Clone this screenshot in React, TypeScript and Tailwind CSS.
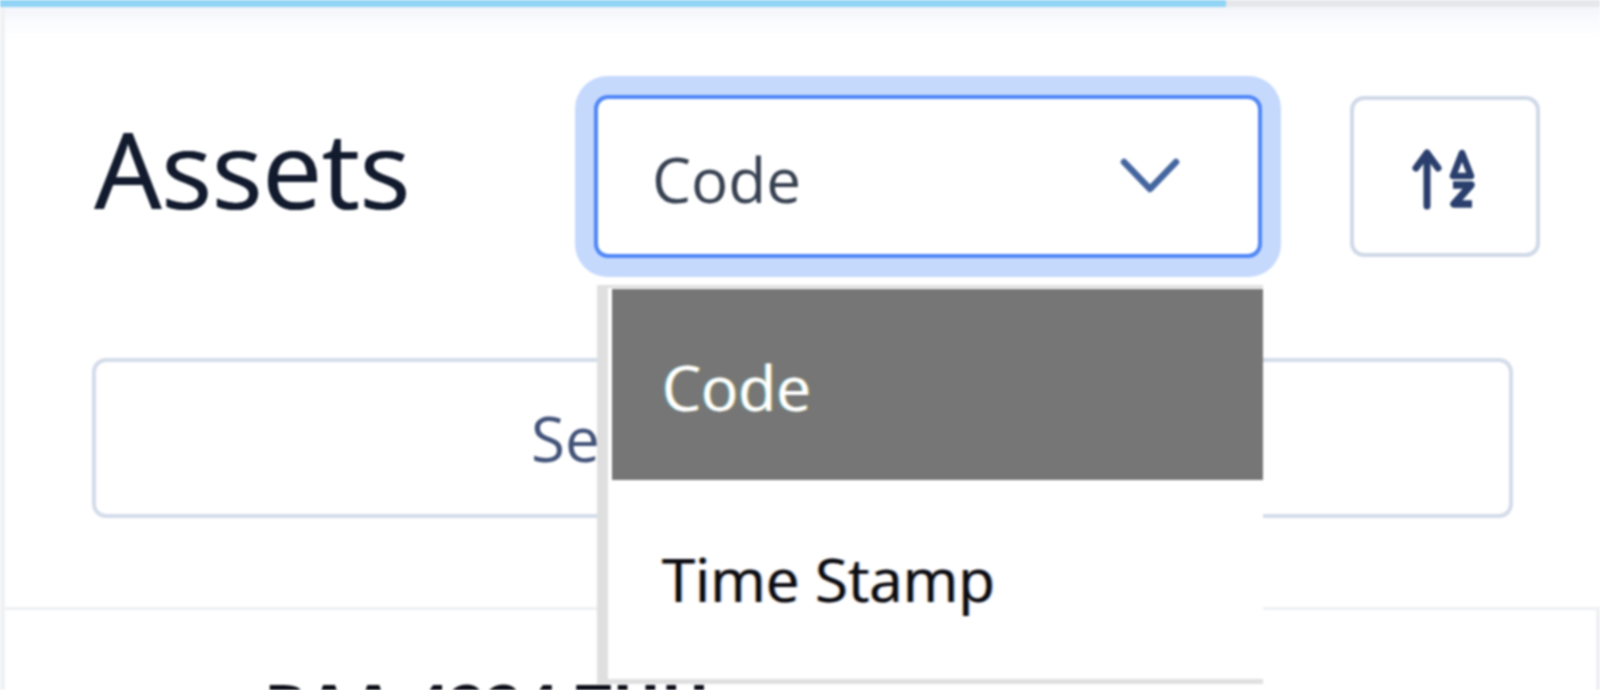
function SortIcon() {
  return (
    <svg width="66" height="62" viewBox="0 0 66 62" fill="none" className="text-[#2a3f6d]">
      {/* arrow */}
      <path d="M15 58V5M4 20 15 5l11 15" stroke="currentColor" strokeWidth="7" strokeLinecap="round" strokeLinejoin="round" />
      {/* small A */}
      <path d="M50 5 41 28h18L50 5Z" stroke="currentColor" strokeWidth="6.5" strokeLinejoin="round" />
      {/* small Z */}
      <path d="M41 37h18L42 56h18" stroke="currentColor" strokeWidth="7.5" strokeLinejoin="round" />
    </svg>
  );
}

function SortSelect() {
  return (
    <div className="relative w-[668px] h-[163px] shrink-0 bg-white rounded-[14px] border-4 border-[#4f86f6] ring-[19px] ring-[#c5d9fd]">
      <div className="flex h-full items-center justify-between pl-[54px] pr-[78px] pt-[4px]">
        <span className="text-[62px] leading-none text-[#374151]">Code</span>
        <svg width="60" height="36" viewBox="0 0 60 36" fill="none" className="text-[#44659f] -mt-[6px]">
          <path d="M4 4 30 31 56 4" stroke="currentColor" strokeWidth="6.5" strokeLinecap="round" strokeLinejoin="round" />
        </svg>
      </div>

      {/* open menu lies over the search box */}
      <div className="absolute left-[-1px] top-[186px] w-[666px] h-[399px] bg-white border-l-[11px] border-t-[3px] border-b-[5px] border-[#dfdfdf] pt-[1px] pl-[4px] leading-none">
        <div className="flex h-[191px] items-center bg-[#767676] pl-[50px] pt-[4px] text-[62px] text-white [text-shadow:1.5px_0_0_rgba(255,190,60,.6),-1.5px_0_0_rgba(80,210,255,.7)]">
          Code
        </div>
        <div className="flex h-[198px] items-center pl-[50px] text-[60px] text-[#0b0b12] [text-shadow:-1.5px_0_0_rgba(255,140,0,.5),1.5px_0_0_rgba(0,120,255,.5)]">
          Time Stamp
        </div>
      </div>
    </div>
  );
}

export default function App() {
  return (
    <div className="w-[1600px] h-[690px] overflow-hidden bg-white blur-[1.2px] font-['Open_Sans','Noto_Sans',sans-serif]">
      {/* progress bar */}
      <div className="flex h-[7px]">
        <div className="w-[1226px] bg-[#8fd3f5]" />
        <div className="flex-1 bg-[#e5e7ea]" />
      </div>

      <div className="h-[683px] border-l-[5px] border-[#f0f1f3]">
        <div className="h-[600px] pl-[87px] bg-[linear-gradient(#f3f5fa,#fafbfe_14px,#fff_32px)]">
          <div className="flex items-center pt-[88px]">
            <h1 className="w-[502px] shrink-0 pl-[2px] pb-[18px] text-[106px] leading-none font-medium text-[#121b2e] [text-shadow:1px_0_0_#121b2e]">Assets</h1>
            <SortSelect />
            <button className="ml-[88px] flex h-[161px] w-[190px] shrink-0 items-center justify-center rounded-[14px] border-4 border-[#d0d9e8] bg-white pt-[4px]">
              <SortIcon />
            </button>
          </div>

          <div className="mt-[100px] w-[1421px] h-[160px] rounded-[14px] border-4 border-[#d4dcea] bg-white pl-[435px] flex items-center text-[62px] leading-none text-[#425379]">
            Search assets
          </div>
        </div>

        <div className="h-[83px] border-t-[3px] border-r-[4px] border-[#eef0f3] pl-[259px] pt-[65px] text-[64px] leading-none font-bold text-[#0a0d16]">
          BAA 4224 THU
        </div>
      </div>
    </div>
  );
}
